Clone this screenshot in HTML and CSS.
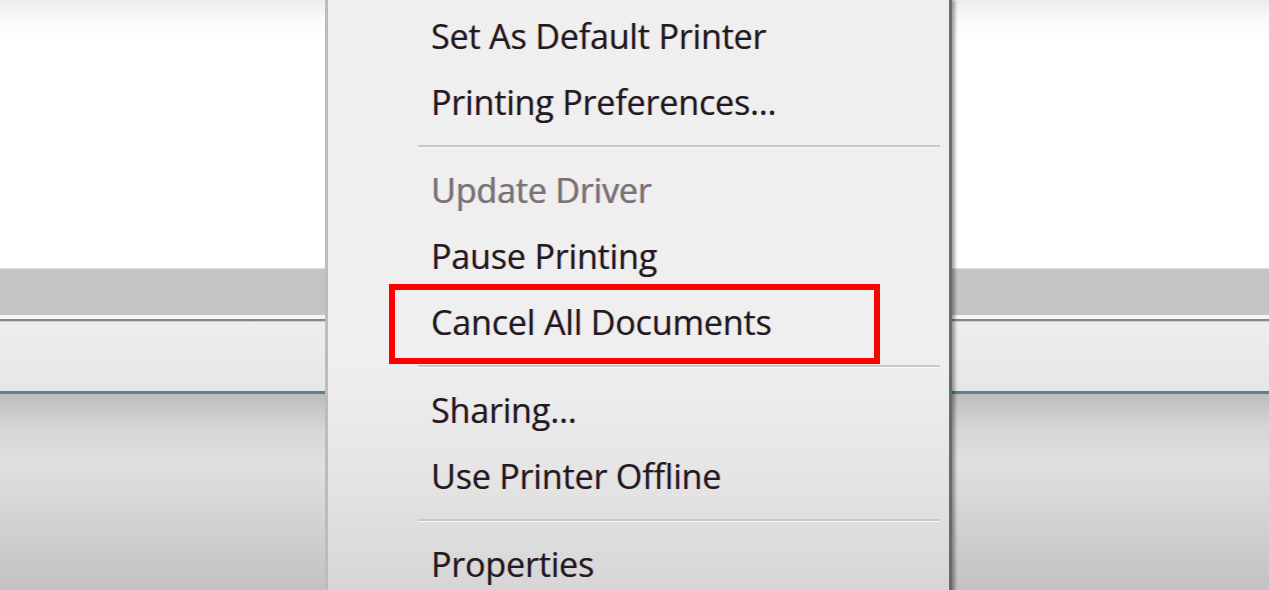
FILE: index.html
```html
<!DOCTYPE html>
<html>
<head>
  <meta charset="UTF-8">
  <title>Printer context menu</title>
  <link rel="stylesheet" href="styles.css">
</head>
<body>
  <!-- window behind the menu -->
  <div class="desk">
    <div class="pane"></div>
    <div class="toolbar"></div>
    <div class="rule-light"></div>
    <div class="rule-dark"></div>
    <div class="strip"></div>
    <div class="rule-blue"></div>
    <div class="footer"></div>
  </div>

  <!-- context menu -->
  <ul class="menu">
    <li class="item">Set As Default Printer</li>
    <li class="item">Printing Preferences...</li>
    <li class="sep"></li>
    <li class="item disabled">Update Driver</li>
    <li class="item">Pause Printing</li>
    <li class="item marked">Cancel All Documents</li>
    <li class="sep"></li>
    <li class="item">Sharing...</li>
    <li class="item">Use Printer Offline</li>
    <li class="sep"></li>
    <li class="item">Properties</li>
  </ul>
</body>
</html>
```

FILE: styles.css
```css
html, body {
  margin: 0;
  height: 100%;
  overflow: hidden;
}
body {
  font-family: "Open Sans", "Noto Sans", sans-serif;
  position: relative;
}

.desk {
  display: flex;
  flex-direction: column;
  height: 590px;
}
.pane {
  height: 268px;
  background: linear-gradient(#ececec, #fafafa 20px, #fff 40px);
  border-bottom: 1px solid #dedede;
}
.toolbar {
  height: 46px;
  background: #c4c4c4;
}
.rule-light {
  height: 4px;
  background: #f6f6f6;
}
.rule-dark {
  height: 2px;
  background: #858585;
  border-bottom: 1px solid #d0d0d0;
}
.strip {
  height: 69px;
  background: linear-gradient(#ededed, #e6e6e6);
}
.rule-blue {
  height: 3px;
  background: #55839e;
}
.footer {
  flex: 1;
  background: linear-gradient(#bdbdbd, #d6d6d6 35px, #e0e0e0 70px, #d4d4d4 120px, #c2c2c2);
}

.menu {
  position: absolute;
  left: 325px;
  top: 0;
  width: 621px;
  height: 600px;
  margin: 0;
  padding: 3px 0 0;
  list-style: none;
  background: linear-gradient(#efefef, #efefef 60%, #e4e4e4 80%, #d4d4d4);
  border-left: 3px solid #bcbcbc;
  box-shadow: 3px 0 0 #6a6a6a, 6px 0 3px rgba(0, 0, 0, 0.35);
}
.item {
  position: relative;
  height: 66px;
  line-height: 66px;
  padding-left: 103px;
  font-size: 34px;
  font-weight: 500;
  letter-spacing: -0.15px;
  color: #1f1a26;
  text-shadow: -1px 0 rgba(170, 150, 40, 0.25), 1px 0 rgba(110, 20, 60, 0.3);
  white-space: nowrap;
}
.item.disabled {
  color: #77727c;
}
.item.marked::after {
  content: "";
  position: absolute;
  left: 61px;
  top: -5px;
  width: 479px;
  height: 68px;
  border: 6px solid #ff0000;
}
.sep {
  height: 2px;
  margin: 10px 9px 9px 90px;
  background: #c9c9c9;
  border-bottom: 1px solid #f8f8f8;
}
```
